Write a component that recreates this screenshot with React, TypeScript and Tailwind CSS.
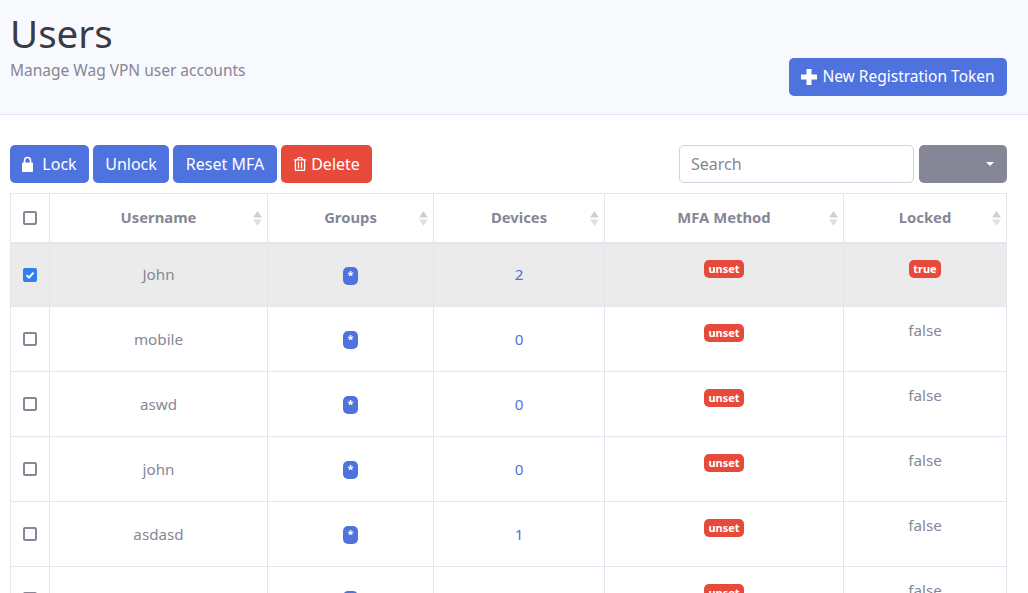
import { FaRegTrashAlt } from "react-icons/fa";

type Row = { name: string; devices: string; locked: boolean; selected?: boolean };

const rows: Row[] = [
  { name: "John", devices: "2", locked: true, selected: true },
  { name: "mobile", devices: "0", locked: false },
  { name: "aswd", devices: "0", locked: false },
  { name: "john", devices: "0", locked: false },
  { name: "asdasd", devices: "1", locked: false },
  // the next row is cut off by the window, its name and count are not visible
  { name: "", devices: "", locked: false },
];

const headers = ["Username", "Groups", "Devices", "MFA Method", "Locked"];

function SortIcon() {
  return (
    <svg width="9" height="15" viewBox="0 0 9 15" className="absolute right-[5px] top-[17px]">
      <path d="M4.5 0L9 6.5H0Z" fill="#cfcfcf" />
      <path d="M4.5 15L0 8.5H9Z" fill="#e0e0e0" />
    </svg>
  );
}

function LockIcon() {
  return (
    <svg width="11" height="16" viewBox="0 0 11 16">
      <path d="M2.5 7V4.5a3 3 0 0 1 6 0V7" fill="none" stroke="#fff" strokeWidth="1.6" />
      <rect x="0" y="6.5" width="11" height="9.5" rx="1" fill="#fff" />
    </svg>
  );
}

function PlusIcon() {
  return (
    <svg width="16" height="16" viewBox="0 0 16 16">
      <path d="M5.5 0H10.5V5.5H16V10.5H10.5V16H5.5V10.5H0V5.5H5.5Z" fill="#fff" />
    </svg>
  );
}

function Checkbox({ checked }: { checked?: boolean }) {
  if (checked) {
    return (
      <span className="mx-auto flex h-[14px] w-[14px] items-center justify-center rounded-[2px] bg-[#2f80ed]">
        <svg width="10" height="10" viewBox="0 0 10 10">
          <path d="M1.5 5.2L4 7.6L8.5 2.6" fill="none" stroke="#fff" strokeWidth="2" />
        </svg>
      </span>
    );
  }
  return <span className="mx-auto block h-[14px] w-[14px] rounded-[2px] border-2 border-[#858796] bg-white" />;
}

function Badge({ children }: { children: string }) {
  return (
    <span className="inline-block h-[18px] rounded-[5px] bg-[#e74a3b] px-[4px] text-[11px] font-bold leading-[18px] text-white">
      {children}
    </span>
  );
}

export default function App() {
  return (
    <div className="h-[593px] overflow-hidden bg-white font-['Noto_Sans',sans-serif] text-[16px] text-[#858796]">
      <header className="flex h-[115px] items-start justify-between border-b border-[#e3e6f0] bg-[#f8f9fc] pl-[10px] pr-[21px]">
        <div>
          <h1 className="mt-[9px] text-[38.5px] leading-[48px] text-[#3a3b45]">Users</h1>
          <p className="mt-[3px] text-[15.5px] leading-[20px]">Manage Wag VPN user accounts</p>
        </div>
        <button className="mt-[58px] flex h-[38px] w-[218px] items-center justify-center gap-[5px] rounded-[5px] bg-[#4e73df] text-[15.5px] text-white">
          <PlusIcon />
          New Registration Token
        </button>
      </header>

      <main className="pl-[10px] pr-[21px] pt-[30px]">
        <div className="mb-[10px] flex items-center justify-between">
          <div className="flex gap-1">
            <button className="flex h-[38px] w-[79px] items-center justify-center gap-[9px] rounded-[5px] bg-[#4e73df] text-white">
              <LockIcon />
              Lock
            </button>
            <button className="h-[38px] w-[76px] rounded-[5px] bg-[#4e73df] text-white">Unlock</button>
            <button className="h-[38px] w-[104px] rounded-[5px] bg-[#4e73df] text-white">Reset MFA</button>
            <button className="flex h-[38px] w-[91px] items-center justify-center gap-1 rounded-[5px] bg-[#e74a3b] text-white">
              <FaRegTrashAlt className="text-[14px]" />
              Delete
            </button>
          </div>
          <div className="flex gap-[5px]">
            <input
              placeholder="Search"
              className="h-[38px] w-[235px] rounded-[5px] border border-[#d1d3e2] bg-white px-[11px] outline-none placeholder:text-[#858796]"
            />
            <button className="flex h-[38px] w-[88px] items-center justify-end rounded-[5px] bg-[#858796] pr-[13px]">
              <span className="h-0 w-0 border-x-[4px] border-t-[4px] border-x-transparent border-t-white" />
            </button>
          </div>
        </div>

        <table className="w-[997px] table-fixed border-collapse text-center text-[15.2px]">
          <colgroup>
            <col className="w-[39px]" />
            <col className="w-[218px]" />
            <col className="w-[166px]" />
            <col className="w-[171px]" />
            <col className="w-[239px]" />
            <col className="w-[163px]" />
          </colgroup>
          <thead>
            <tr className="h-[49px]">
              <th className="border border-b-2 border-[#e3e6f0]">
                <Checkbox />
              </th>
              {headers.map((h) => (
                <th key={h} className="relative border border-b-2 border-[#e3e6f0] pb-[2px] text-[14.8px] font-bold">
                  {h}
                  <SortIcon />
                </th>
              ))}
            </tr>
          </thead>
          <tbody>
            {rows.map((r, i) => (
              <tr key={i} className={r.selected ? "h-[64px] bg-[#ebebeb]" : "h-[65px]"}>
                <td className="border border-[#e3e6f0] align-middle">
                  <Checkbox checked={r.selected} />
                </td>
                <td className="border border-[#e3e6f0] align-middle">{r.name}</td>
                <td className="border border-[#e3e6f0] align-middle">
                  <span className="mb-[1px] inline-block h-[18px] w-[15px] rounded-[5px] bg-[#4e73df] align-middle text-[11px] font-bold leading-[15px] text-white">*</span>
                </td>
                <td className="border border-[#e3e6f0] align-middle text-[#4e73df]">{r.devices}</td>
                <td className={`border border-[#e3e6f0] align-top leading-[22px] ${r.selected ? "pt-[12px]" : "pt-[13px]"}`}>
                  <Badge>unset</Badge>
                </td>
                <td className="border border-[#e3e6f0] pt-[12px] align-top leading-[22px]">
                  {r.locked ? <Badge>true</Badge> : "false"}
                </td>
              </tr>
            ))}
          </tbody>
        </table>
      </main>
    </div>
  );
}
